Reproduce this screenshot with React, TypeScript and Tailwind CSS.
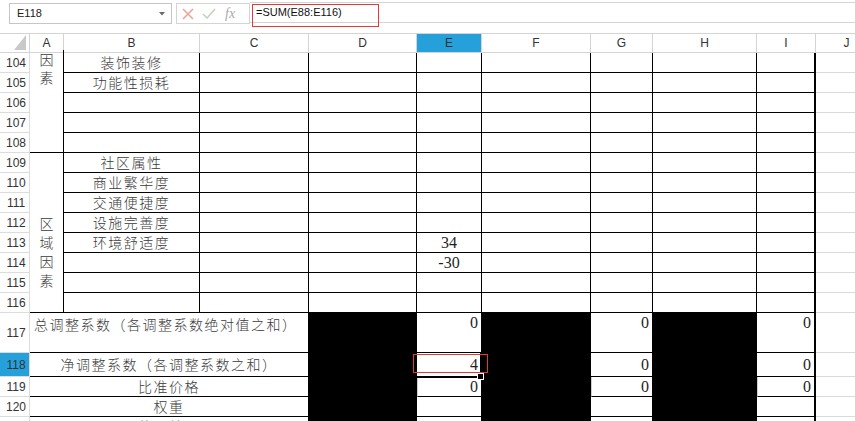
import { Fragment } from "react"

const ui = "[font-family:'Segoe_UI','Liberation_Sans',sans-serif]"
const cjk = "[font-family:'SimSun','Noto_Sans_CJK_SC',sans-serif] font-light text-[14px] tracking-[1.5px] text-[#3a3a3a] whitespace-nowrap"
const num = "[font-family:'Liberation_Serif','Times_New_Roman',serif] text-[16px] text-[#1f1f1f]"
const line = "border-r border-b border-black"
const blackCell = "bg-black border-r border-b border-black"
const lastCol = "border-r-2 border-b border-black"
const spare = "border-b border-[#dadada]"

const columns = ["A", "B", "C", "D", "E", "F", "G", "H", "I", "J"]

type BodyRow = { n: number; label?: string; e?: string }

const bodyRows: BodyRow[] = [
  { n: 104, label: "装饰装修" },
  { n: 105, label: "功能性损耗" },
  { n: 106 },
  { n: 107 },
  { n: 108 },
  { n: 109, label: "社区属性" },
  { n: 110, label: "商业繁华度" },
  { n: 111, label: "交通便捷度" },
  { n: 112, label: "设施完善度" },
  { n: 113, label: "环境舒适度", e: "34" },
  { n: 114, e: "-30" },
  { n: 115 },
  { n: 116 },
]

function RowHead({ n, active }: { n: number; active?: boolean }) {
  return (
    <div
      className={`${ui} flex items-center justify-center border-r border-b border-[#dcdcdc] pl-[3px] text-[12px] text-[#333] ${
        active ? "bg-[#26a0da]" : "bg-white"
      }`}
    >
      {n}
    </div>
  )
}

// vertical text inside a merged cell, one glyph per line
function Stack({ text, className }: { text: string; className: string }) {
  return (
    <div className={`flex flex-col items-center ${className}`}>
      {text.split("").map((ch, i) => (
        <span key={i} className={`${cjk} tracking-normal`}>
          {ch}
        </span>
      ))}
    </div>
  )
}

function FormulaBar() {
  return (
    <div className="relative flex h-[33px] items-start bg-white">
      <div className="ml-[9px] mt-[3px] flex h-[21px] w-[163px] items-center justify-between border border-[#c6c6c6] pl-[7px] pr-[6px]">
        <span className={`${ui} text-[11px] text-[#222]`}>E118</span>
        <svg width="6" height="4" viewBox="0 0 6 4">
          <path d="M0 0h6L3 3.5z" fill="#6b6b6b" />
        </svg>
      </div>
      <div className="ml-[4px] mt-[3px] flex h-[21px] w-[74px] items-center border border-[#d4d4d4] pl-[5px]">
        <svg width="12" height="12" viewBox="0 0 12 12">
          <path d="M1 1l10 10M11 1L1 11" stroke="#f2a59c" strokeWidth="1.7" fill="none" />
        </svg>
        <svg className="ml-[8px]" width="14" height="11" viewBox="0 0 14 11">
          <path d="M1 6l4 4 8-9" stroke="#c3d3c3" strokeWidth="1.6" fill="none" />
        </svg>
        <span className="ml-[9px] [font-family:'Liberation_Serif',serif] text-[14px] italic text-[#ababab]">fx</span>
      </div>
      <div className="mt-[2px] flex h-[21px] flex-1 items-center border-y border-[#d4d4d4] pl-[6px]">
        <span className={`${ui} text-[11px] text-[#111]`}>=SUM(E88:E116)</span>
      </div>
      <div className="pointer-events-none absolute left-[252px] top-[4px] h-[23px] w-[127px] border border-[#e53935]" />
    </div>
  )
}

function Sheet() {
  return (
    <div className="relative">
      <div className="grid grid-cols-[30px_34px_136px_109px_108px_65px_109px_62px_104px_59px_62px] grid-rows-[repeat(14,20px)_40px_24px_repeat(3,20px)]">
        {/* column headers */}
        <div className="flex items-end justify-end border-y border-r border-[#d4d4d4] pb-[2px] pr-[3px]">
          <svg width="12" height="15" viewBox="0 0 12 15">
            <path d="M12 0v15H0z" fill="#c9c9c9" />
          </svg>
        </div>
        {columns.map((c) => (
          <div
            key={c}
            className={`${ui} flex items-center justify-center border-y border-r border-[#d4d4d4] text-[12px] text-[#333] ${
              c === "E" ? "bg-[#26a0da]" : "bg-white"
            }`}
          >
            {c}
          </div>
        ))}

        {/* factor rows */}
        {bodyRows.map((row) => (
          <Fragment key={row.n}>
            <RowHead n={row.n} />
            {row.n === 104 && <Stack text="因素" className={`row-span-5 ${line} -mt-[3px] leading-[18px]`} />}
            {row.n === 109 && <Stack text="区域因素" className={`row-span-8 ${line} pt-[61px] leading-[19px]`} />}
            <div className={`${line} flex items-center justify-center ${cjk}`}>{row.label}</div>
            <div className={line} />
            <div className={line} />
            <div className={`${line} flex items-center justify-center ${num}`}>{row.e}</div>
            <div className={line} />
            <div className={line} />
            <div className={line} />
            <div className={lastCol} />
            <div className={spare} />
          </Fragment>
        ))}

        {/* 117 */}
        <RowHead n={117} />
        <div className={`col-span-3 ${line} pl-[4px] pt-[1px] leading-[20px] ${cjk}`}>总调整系数（各调整系数绝对值之和）</div>
        <div className={blackCell} />
        <div className={`${line} flex justify-end pr-[3px] leading-[20px] ${num}`}>0</div>
        <div className={blackCell} />
        <div className={`${line} flex justify-end pr-[3px] leading-[20px] ${num}`}>0</div>
        <div className={blackCell} />
        <div className={`${lastCol} flex justify-end pr-[3px] leading-[20px] ${num}`}>0</div>
        <div className={spare} />

        {/* 118 */}
        <RowHead n={118} active />
        <div className={`col-span-3 ${line} flex items-center justify-center ${cjk}`}>净调整系数（各调整系数之和）</div>
        <div className={blackCell} />
        <div className={`${line} flex items-center justify-end pr-[3px] ${num}`}>4</div>
        <div className={blackCell} />
        <div className={`${line} flex items-center justify-end pr-[3px] ${num}`}>0</div>
        <div className={blackCell} />
        <div className={`${lastCol} flex items-center justify-end pr-[3px] ${num}`}>0</div>
        <div className={spare} />

        {/* 119 */}
        <RowHead n={119} />
        <div className={`col-span-3 ${line} flex items-center justify-center ${cjk}`}>比准价格</div>
        <div className={blackCell} />
        <div className={`${line} flex items-center justify-end border-l border-l-[#d0d0d0] pr-[3px] ${num}`}>0</div>
        <div className={blackCell} />
        <div className={`${line} flex items-center justify-end border-l border-l-[#d0d0d0] pr-[3px] ${num}`}>0</div>
        <div className={blackCell} />
        <div className={`${lastCol} flex items-center justify-end border-l border-l-[#d0d0d0] pr-[3px] ${num}`}>0</div>
        <div className={spare} />

        {/* 120 */}
        <RowHead n={120} />
        <div className={`col-span-3 ${line} flex items-center justify-center ${cjk}`}>权重</div>
        <div className={blackCell} />
        <div className={line} />
        <div className={blackCell} />
        <div className={line} />
        <div className={blackCell} />
        <div className={lastCol} />
        <div className={spare} />

        {/* 121 */}
        <RowHead n={121} />
        <div className={`col-span-3 ${line} flex items-center justify-center ${cjk}`}>估价结果</div>
        <div className={blackCell} />
        <div className={line} />
        <div className={blackCell} />
        <div className={line} />
        <div className={blackCell} />
        <div className={lastCol} />
        <div className={spare} />
      </div>

      {/* active cell E118 with fill handle */}
      <div className="pointer-events-none absolute left-[416px] top-[319px] h-[26px] w-[66px] border-r-2 border-b-2 border-black" />
      <div className="pointer-events-none absolute left-[477px] top-[340px] h-[7px] w-[7px] border border-white bg-black" />
      <div className="pointer-events-none absolute left-[413px] top-[321px] h-[19px] w-[75px] border border-[#e53935]" />
    </div>
  )
}

export default function App() {
  return (
    <div className="h-[421px] w-full overflow-hidden bg-white">
      <FormulaBar />
      <Sheet />
    </div>
  )
}
